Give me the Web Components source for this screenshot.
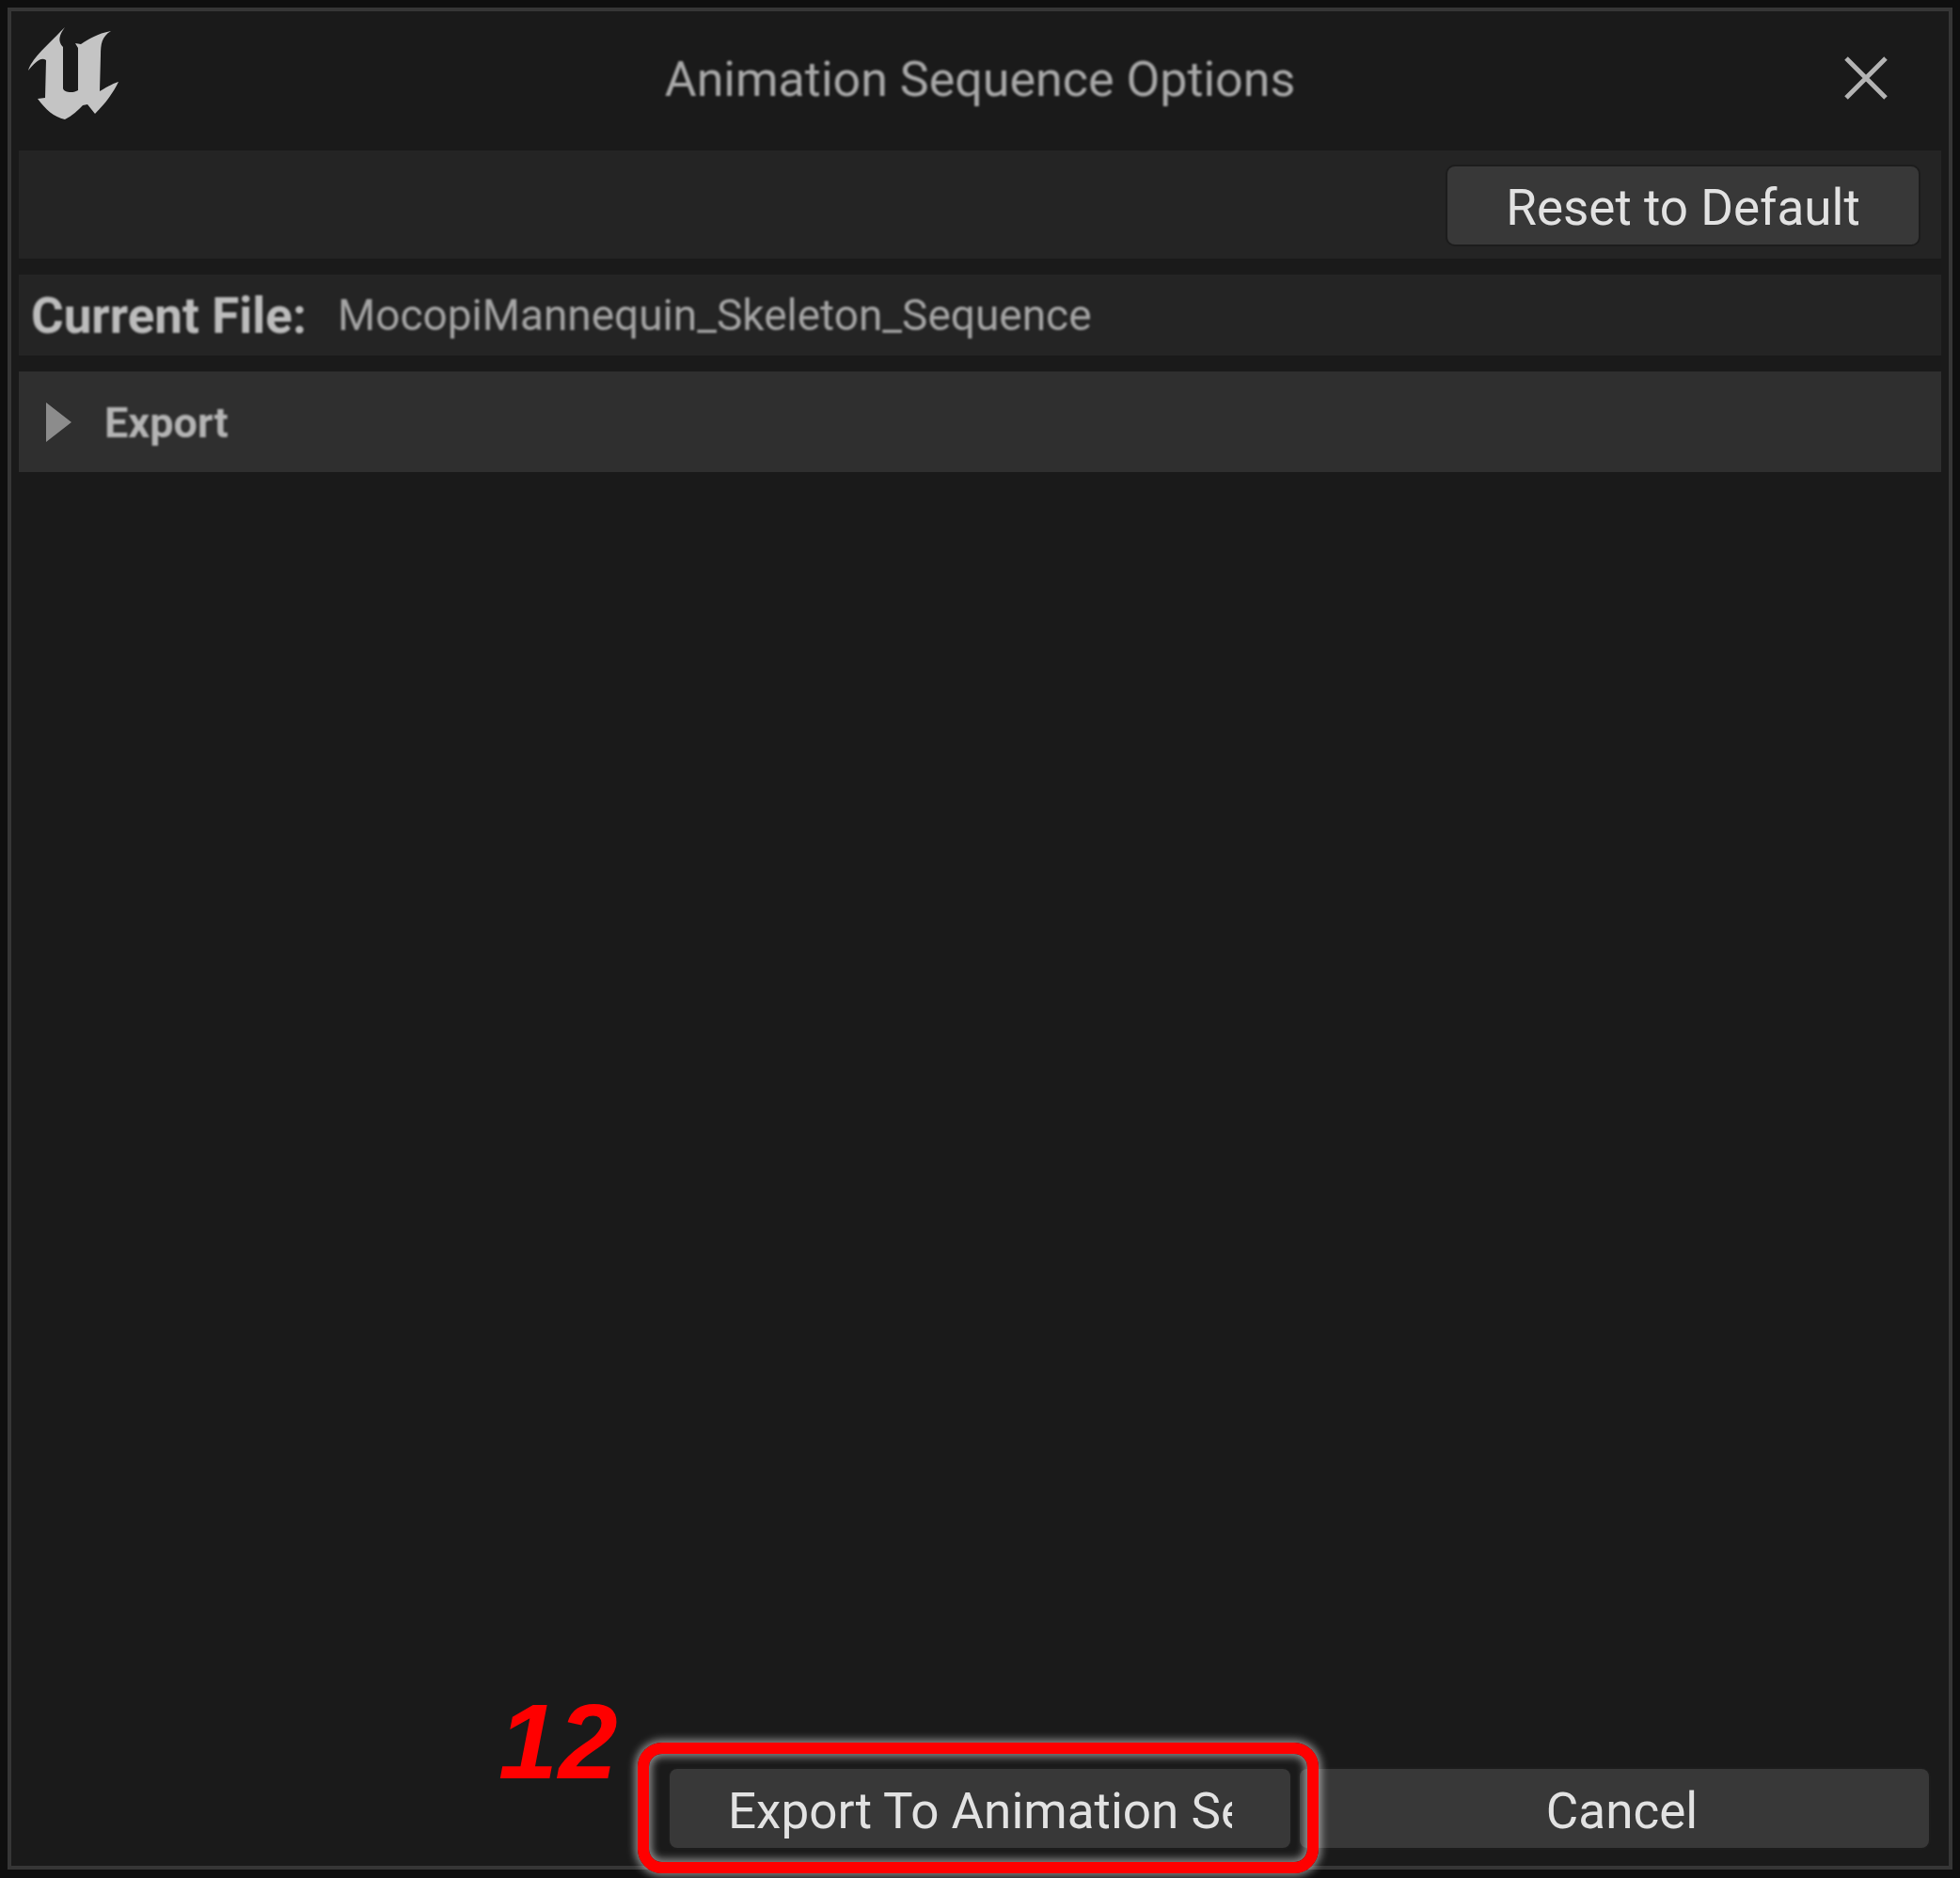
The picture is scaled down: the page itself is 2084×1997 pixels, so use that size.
<!DOCTYPE html>
<html>
<head>
<meta charset="utf-8">
<title>Animation Sequence Options</title>
<style>
    html, body { margin: 0; padding: 0; background: #0f0f0f; }
    body { font-family: Roboto, "Liberation Sans", sans-serif; height: 1997px; overflow: hidden; }
</style>
</head>
<body>
<ue-dialog heading="Animation Sequence Options">
    <ue-toolbar><ue-button class="reset">Reset to Default</ue-button></ue-toolbar>
    <ue-file-row label="Current File:" value="MocopiMannequin_Skeleton_Sequence"></ue-file-row>
    <ue-section-header>Export</ue-section-header>
    <ue-button slot="footer" class="export" clip>Export To Animation Sequence</ue-button>
    <ue-button slot="footer" class="cancel">Cancel</ue-button>
</ue-dialog>
<ue-callout number="12"></ue-callout>

<script>
class UeDialog extends HTMLElement {
    constructor() {
        super()
        this.attachShadow({mode:'open'})
        this.shadowRoot.innerHTML = `
        <style>
            :host{
                display: flex;
                flex-direction: column;
                box-sizing: border-box;
                width: 2068px;
                height: 1980px;
                margin: 8px 0 0 8px;
                border: 4px solid #363636;
                background: #1a1a1a;
                color: #a8a8a8;
            }
            header{
                flex: none;
                height: 148px;
                display: grid;
                grid-template-columns: 1fr auto 1fr;
                align-items: center;
                box-sizing: border-box;
                padding: 0 42px;
            }
            h1{
                margin: 0;
                font-size: 52px;
                font-weight: 400;
                filter: blur(.8px);
                transform: translateY(-2px);
            }
            .logo{ width: 110px; height: 98px; display: block; margin-top: -16px; margin-left: -33px; filter: blur(.6px); }
            .close{ justify-self: end; width: 48px; height: 48px; display: block; margin-top: -6px; margin-right: 22px; filter: blur(.6px); }
            main{
                flex: 1;
                display: flex;
                flex-direction: column;
                gap: 17px;
                margin: 0 8px 0 8px;
            }
            footer{
                flex: none;
                display: flex;
                justify-content: flex-end;
                gap: 10px;
                padding: 0 21px 19px 0;
            }
        </style>
        <header>
            <svg class="logo" viewBox="0 0 110 98">
                <path fill="#c4c4c4" d="M19 46 C23 34 34 24 58 0 C52 8 50 15 56 21 L56 65 C57 70 68 70 72 67 L72 22 L69 17 L75 18 C84 12 92 7 107 4 C97 10 96 18 96 30 L95 68 C105 62 111 59 115 58 C109 70 102 80 90 92 L82 82 L77 83 C72 88 66 94 58 98 C46 95 38 88 29 76 L37 75 L38 35 C32 31 26 38 19 46 Z" transform="translate(-10 0)"/>
            </svg>
            <h1></h1>
            <svg class="close" viewBox="0 0 48 48">
                <path d="M3 3 L45 45 M45 3 L3 45" stroke="#b4b4b4" stroke-width="5" fill="none"/>
            </svg>
        </header>
        <main><slot></slot></main>
        <footer><slot name="footer"></slot></footer>
        `
        this.shadowRoot.querySelector('h1').textContent = this.getAttribute('heading')
    }
}

class UeToolbar extends HTMLElement {
    constructor() {
        super()
        this.attachShadow({mode:'open'})
        this.shadowRoot.innerHTML = `
        <style>
            :host{
                display: flex;
                justify-content: flex-end;
                align-items: center;
                box-sizing: border-box;
                height: 115px;
                padding: 2px 24px 0 0;
                background: #242424;
                --btn-w: 501px;
                --btn-h: 83px;
            }
        </style>
        <slot></slot>
        `
    }
}

class UeFileRow extends HTMLElement {
    constructor() {
        super()
        this.attachShadow({mode:'open'})
        this.shadowRoot.innerHTML = `
        <style>
            :host{
                display: flex;
                align-items: center;
                box-sizing: border-box;
                height: 86px;
                padding: 0 0 0 13px;
                background: #242424;
            }
            b{
                font-size: 53px;
                font-weight: 700;
                color: #bcbcbc;
                width: 326px;
                padding-top: 2px;
                filter: blur(.8px);
            }
            span{
                font-size: 46px;
                color: #a4a4a4;
                filter: blur(.8px);
            }
        </style>
        <b></b><span></span>
        `
        this.shadowRoot.querySelector('b').textContent = this.getAttribute('label')
        this.shadowRoot.querySelector('span').textContent = this.getAttribute('value')
    }
}

class UeSectionHeader extends HTMLElement {
    constructor() {
        super()
        this.attachShadow({mode:'open'})
        this.shadowRoot.innerHTML = `
        <style>
            :host{
                display: flex;
                align-items: center;
                gap: 35px;
                box-sizing: border-box;
                height: 107px;
                padding: 0 0 0 29px;
                background: #2f2f2f;
                color: #b4b4b4;
                font-size: 45px;
                font-weight: 700;
            }
            svg{ width: 27px; height: 42px; display: block; filter: blur(.6px); }
            span{ filter: blur(.8px); padding-top: 1px; }
        </style>
        <svg viewBox="0 0 27 42"><path fill="#8c8c8c" d="M0 0 L27 21 L0 42 Z"/></svg>
        <span><slot></slot></span>
        `
    }
}

class UeButton extends HTMLElement {
    constructor() {
        super()
        this.attachShadow({mode:'open'})
        this.shadowRoot.innerHTML = `
        <style>
            :host{
                display: block;
                flex: none;
                width: var(--btn-w);
                height: var(--btn-h);
            }
            :host(.export){ width: 660px; height: 84px; }
            :host(.cancel){ width: 669px; height: 84px; }
            .face{
                box-sizing: border-box;
                height: 100%;
                display: flex;
                justify-content: center;
                align-items: center;
                padding: 6px 62px 0;
                background: #383838;
                border-radius: 8px;
                box-shadow: 0 0 0 2px #1c1c1c;
                color: #e2e2e2;
                font-size: 53px;
                white-space: nowrap;
            }
            :host(.reset) .face{ padding-top: 4px; }
            :host([clip]) .face{ justify-content: flex-start; }
            :host(.cancel) .face{ padding-left: 78px; }
            .label{ overflow: hidden; filter: blur(.7px); }
        </style>
        <div class="face"><span class="label"><slot></slot></span></div>
        `
    }
}

class UeCallout extends HTMLElement {
    constructor() {
        super()
        this.attachShadow({mode:'open'})
        this.shadowRoot.innerHTML = `
        <style>
            :host{ display: contents; }
            .box{
                position: absolute;
                left: 678px;
                top: 1853px;
                width: 724px;
                height: 139px;
                box-sizing: border-box;
                border: 12.5px solid #ff0000;
                border-radius: 26px;
                box-shadow: 0 0 8px 3px rgba(255,255,255,.5), inset 0 0 8px 3px rgba(255,255,255,.5);
            }
            .num{
                position: absolute;
                left: 530px;
                top: 1785px;
                color: #ff0000;
                letter-spacing: 1px;
                font: italic 700 113px/135px "Liberation Sans", Arial, sans-serif;
            }
        </style>
        <div class="box"></div>
        <div class="num"></div>
        `
        this.shadowRoot.querySelector('.num').textContent = this.getAttribute('number')
    }
}

customElements.define('ue-dialog',UeDialog)
customElements.define('ue-toolbar',UeToolbar)
customElements.define('ue-file-row',UeFileRow)
customElements.define('ue-section-header',UeSectionHeader)
customElements.define('ue-button',UeButton)
customElements.define('ue-callout',UeCallout)
</script>
</body>
</html>
